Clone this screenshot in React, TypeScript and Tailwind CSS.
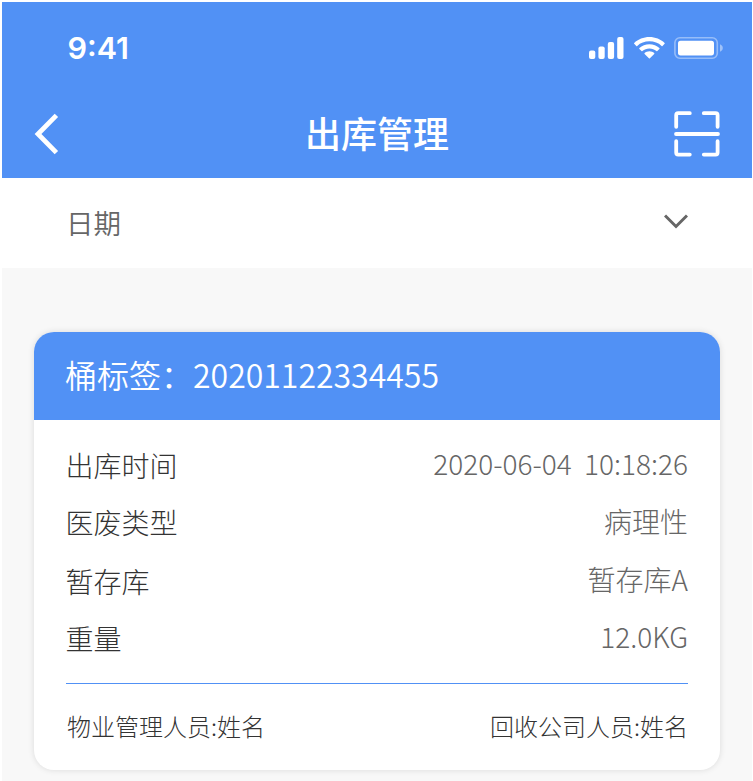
import { ReactNode } from "react";

const rows = [
  { label: "出库时间", value: "2020-06-04  10:18:26", offset: "" },
  { label: "医废类型", value: "病理性", offset: "" },
  { label: "暂存库", value: "暂存库A", offset: "pt-[2px]" },
  { label: "重量", value: "12.0KG", offset: "" },
];

const SignalIcon = () => (
  <svg width="35" height="22" viewBox="0 0 35 22" fill="white">
    <rect x="0" y="13.5" width="6.3" height="8.5" rx="2" />
    <rect x="9.4" y="9.5" width="6.3" height="12.5" rx="2" />
    <rect x="18.8" y="5" width="6.3" height="17" rx="2" />
    <rect x="28.2" y="0" width="6.3" height="22" rx="2" />
  </svg>
);

const WifiIcon = () => (
  <svg width="31" height="22" viewBox="0 0 31 22" fill="white">
    <path d="M15.4 0C21.3 0 26.7 2.2 30.6 5.9C30.9 6.2 30.9 6.5 30.6 6.8L28.5 8.9C28.2 9.2 27.9 9.2 27.6 8.9C24.4 5.9 20.1 4.3 15.4 4.3C10.8 4.3 6.4 5.9 3.2 8.9C2.9 9.2 2.6 9.2 2.3 8.9L0.2 6.8C-0.1 6.5 -0.1 6.2 0.2 5.9C4.1 2.2 9.5 0 15.4 0Z" />
    <path d="M15.4 7.2C19.3 7.2 22.8 8.6 25.4 11C25.7 11.3 25.7 11.7 25.4 12L23.3 14.1C23 14.4 22.7 14.4 22.4 14.1C20.5 12.4 18.1 11.4 15.4 11.4C12.7 11.4 10.3 12.4 8.4 14.1C8.1 14.4 7.8 14.4 7.5 14.1L5.4 12C5.1 11.7 5.1 11.3 5.4 11C8 8.6 11.5 7.2 15.4 7.2Z" />
    <path d="M15.4 14.3C17.3 14.3 19 15 20.2 16.1C20.5 16.4 20.5 16.7 20.2 17L15.9 21.3C15.6 21.6 15.2 21.6 14.9 21.3L10.6 17C10.3 16.7 10.3 16.4 10.6 16.1C11.8 15 13.5 14.3 15.4 14.3Z" />
  </svg>
);

const BatteryIcon = () => (
  <svg width="50" height="22" viewBox="0 0 50 22">
    <rect x="0.9" y="0.8" width="42.4" height="20.4" rx="5" fill="none" stroke="white" strokeOpacity="0.4" strokeWidth="1.6" />
    <path d="M46 7.3C47.7 8 48.8 9.4 48.8 11C48.8 12.6 47.7 14 46 14.7Z" fill="white" fillOpacity="0.45" />
    <rect x="4" y="3.8" width="36" height="14.6" rx="2.6" fill="white" />
  </svg>
);

const ScanIcon = () => (
  <svg width="46" height="46" viewBox="0 0 46 46" fill="none" stroke="white" strokeWidth="3.8" strokeLinecap="round" strokeLinejoin="round">
    <path d="M2.2 15.8V4.2Q2.2 2.2 4.2 2.2H15.8" />
    <path d="M29.8 2.2H41.6Q43.6 2.2 43.6 4.2V15.8" />
    <path d="M2.2 30.2V41.6Q2.2 43.6 4.2 43.6H15.8" />
    <path d="M29.8 43.6H41.6Q43.6 43.6 43.6 41.6V30.2" />
    <path d="M2 23H44" />
  </svg>
);

const Row = ({ label, offset, children }: { label: string; offset: string; children: ReactNode }) => (
  <div className={`flex h-[57.6px] items-center justify-between text-[28px] ${offset}`}>
    <span className="text-[#333333]">{label}</span>
    <span className="pb-[3px] whitespace-pre text-[#666666]">{children}</span>
  </div>
);

const App = () => {
  return (
    <div className="h-[781px] overflow-hidden bg-white pt-[2px] pl-[2px] font-['Noto_Sans_CJK_SC',sans-serif]">
      <div className="flex h-full w-[750px] flex-col bg-[#f8f8f8]">

        {/* Header */}
        <header className="h-[176px] bg-[#5191f5] text-white">
          <div className="flex h-[88px] items-center justify-between pt-1 pr-7 pl-[65.5px]">
            <span className="font-['Inter',sans-serif] text-[30.5px] font-semibold">9:41</span>
            <div className="flex items-center gap-[9.5px]">
              <SignalIcon />
              <WifiIcon />
              <BatteryIcon />
            </div>
          </div>
          <div className="grid h-[88px] grid-cols-3 items-center pr-8 pl-8">
            <svg width="26" height="42" viewBox="0 0 26 42" fill="none" stroke="white" strokeWidth="4.8">
              <path d="M22.4 2.4L4 21L22.4 39.6" />
            </svg>
            <h1 className="pb-[5px] text-center text-[36px] leading-none font-medium">出库管理</h1>
            <div className="justify-self-end">
              <ScanIcon />
            </div>
          </div>
        </header>

        {/* Date filter */}
        <div className="flex h-[90px] items-center justify-between bg-white pr-16 pl-16 text-[27.5px] text-[#666666]">
          <span className="font-[350]">日期</span>
          <svg width="24" height="15" viewBox="0 0 24 15" fill="none" stroke="#666666" strokeWidth="3" className="mb-1">
            <path d="M1 1.5L12 12.5L23 1.5" />
          </svg>
        </div>

        {/* Record card */}
        <section className="mt-16 ml-8 h-[438px] w-[686px] overflow-hidden rounded-[20px] bg-white font-light shadow-[0_0_6px_rgba(0,0,0,0.12)]">
          <h2 className="flex h-[88px] items-center bg-[#5191f5] pr-8 pb-[5px] pl-[31px] text-[32px] font-[350] text-white">
            桶标签：20201122334455
          </h2>
          <div className="px-8 pt-4">
            <div className="-ml-[0.5px]">
              {rows.map((row) => (
                <Row key={row.label} label={row.label} offset={row.offset}>
                  {row.value}
                </Row>
              ))}
            </div>
            <div className="mt-[17px] flex justify-between border-t border-[#5191f5] pt-6 pl-px text-[24px] text-[#333333]">
              <span>物业管理人员:姓名</span>
              <span>回收公司人员:姓名</span>
            </div>
          </div>
        </section>

      </div>
    </div>
  );
};

export default App;
